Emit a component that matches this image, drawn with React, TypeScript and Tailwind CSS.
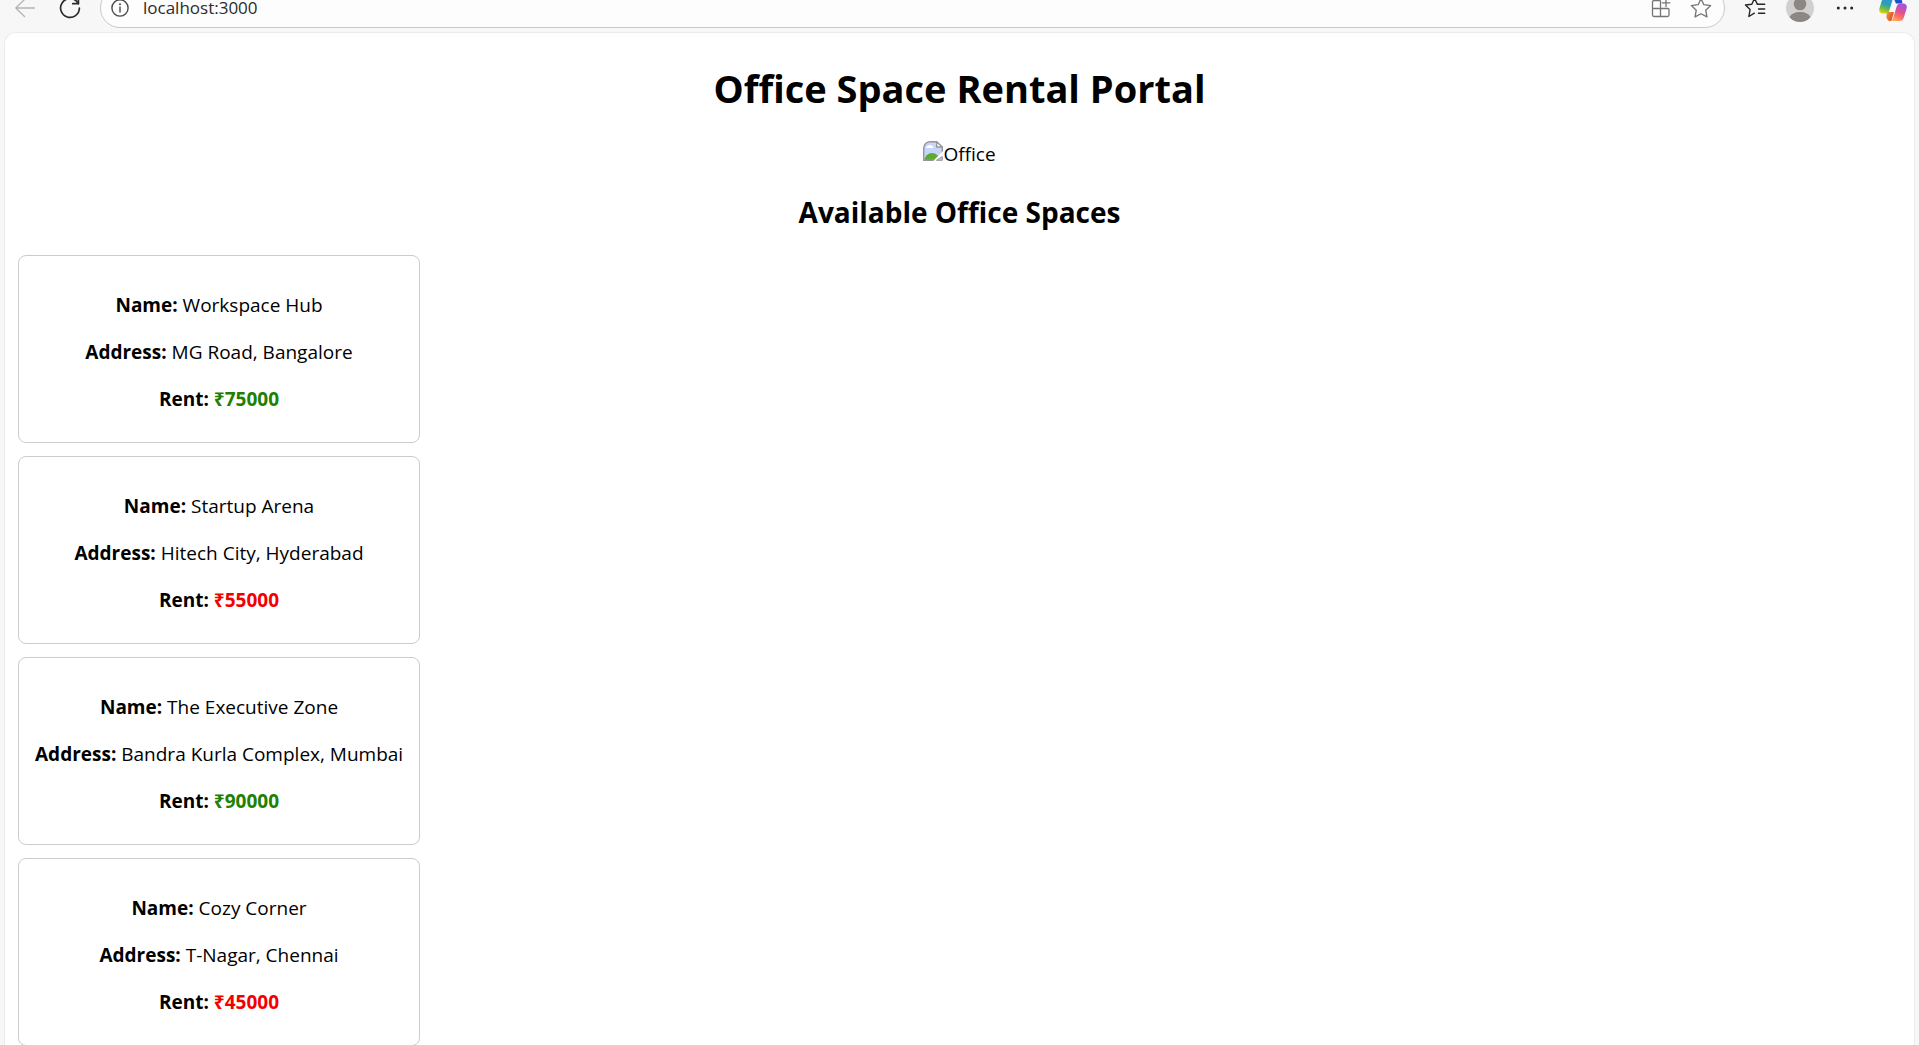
import React from "react";

type Office = { name: string; address: string; rent: number };

const offices: Office[] = [
  { name: "Workspace Hub", address: "MG Road, Bangalore", rent: 75000 },
  { name: "Startup Arena", address: "Hitech City, Hyderabad", rent: 55000 },
  { name: "The Executive Zone", address: "Bandra Kurla Complex, Mumbai", rent: 90000 },
  { name: "Cozy Corner", address: "T-Nagar, Chennai", rent: 45000 },
];

const starPath =
  "M10 1.5 L12.6 7 L18.8 7.8 L14.3 12 L15.4 18.1 L10 15.2 L4.6 18.1 L5.7 12 L1.2 7.8 L7.4 7 Z";

function BackIcon() {
  return (
    <svg width="20" height="20" viewBox="0 0 20 20" fill="none" stroke="#b4b4b4" strokeWidth="1.3" strokeLinecap="round" strokeLinejoin="round">
      <path d="M19.5 10H.8M9.5 1.5.8 10l8.7 8.5" />
    </svg>
  );
}

function ReloadIcon() {
  return (
    <svg width="22" height="22" viewBox="0 0 22 22" fill="none" stroke="#2b2b2b" strokeWidth="1.7" strokeLinecap="round" strokeLinejoin="round">
      <path d="M20.4 11A9.4 9.4 0 1 1 18.4 5.2L19.4 6.5" />
      <path d="M19.4 1v5.7h-5.6" />
    </svg>
  );
}

function InfoIcon() {
  return (
    <svg width="18" height="18" viewBox="0 0 18 18" fill="none" stroke="#4a4a4a" strokeWidth="1.4">
      <circle cx="9" cy="9" r="8.1" />
      <path d="M9 8v5" strokeLinecap="round" />
      <circle cx="9" cy="5.3" r="1" fill="#4a4a4a" stroke="none" />
    </svg>
  );
}

function AppsIcon() {
  return (
    <svg width="20" height="20" viewBox="0 0 20 20" fill="none" stroke="#757575" strokeWidth="1.3" strokeLinejoin="round">
      <path d="M9.5 2.5H3A1.5 1.5 0 0 0 1.5 4v13A1.5 1.5 0 0 0 3 18.5h13.5A1.5 1.5 0 0 0 18 17v-5.5a1 1 0 0 0-1-1H1.5M9.5 2.5v16" />
      <path d="M15 1v7.5M11.3 4.8h7.5" strokeLinecap="round" />
    </svg>
  );
}

function StarIcon() {
  return (
    <svg width="22" height="22" viewBox="0 0 20 20" fill="none" stroke="#757575" strokeWidth="1.2" strokeLinejoin="round">
      <path d={starPath} />
    </svg>
  );
}

function FavoritesIcon() {
  return (
    <svg width="22" height="22" viewBox="0 0 22 22" fill="none" stroke="#262626" strokeWidth="1.4" strokeLinejoin="round" strokeLinecap="round">
      <path d="M13.2 6.8 10.5 1.5 7.8 7.2 1.5 8 6.1 12.5 4.9 19.5 10.3 16.2" />
      <path d="M13.2 7.2h7.5M14.5 12h6.2M14.5 16.2h6.2" />
    </svg>
  );
}

function AvatarIcon() {
  return (
    <svg width="28" height="28" viewBox="0 0 28 28">
      <defs>
        <clipPath id="avatar-clip">
          <circle cx="14" cy="14" r="14" />
        </clipPath>
      </defs>
      <g clipPath="url(#avatar-clip)">
        <rect width="28" height="28" fill="#d2d0ce" />
        <circle cx="14" cy="10" r="6.3" fill="#8a8784" />
        <path d="M3.500 23C5 20 9 18 14 18s9 2 10.500 5L20 29H8Z" fill="#8a8784" />
      </g>
    </svg>
  );
}

function MoreIcon() {
  return (
    <svg width="18" height="18" viewBox="0 0 18 18" fill="#262626">
      <circle cx="2.3" cy="9" r="1.5" />
      <circle cx="9" cy="9" r="1.5" />
      <circle cx="15.7" cy="9" r="1.5" />
    </svg>
  );
}

function CopilotIcon() {
  return (
    <svg width="28" height="28" viewBox="0 0 28 28">
      <defs>
        <linearGradient id="cp-left" x1="0.6" y1="0" x2="0.3" y2="1">
          <stop offset="0" stopColor="#2a8fe8" />
          <stop offset="0.5" stopColor="#2f9fb0" />
          <stop offset="0.75" stopColor="#6cc040" />
          <stop offset="1" stopColor="#f0cc10" />
        </linearGradient>
        <linearGradient id="cp-right" x1="0.7" y1="0" x2="0.3" y2="1">
          <stop offset="0" stopColor="#9b52ee" />
          <stop offset="0.45" stopColor="#e0508f" />
          <stop offset="0.75" stopColor="#fb7564" />
          <stop offset="1" stopColor="#ffae50" />
        </linearGradient>
        <linearGradient id="cp-foot" x1="0" y1="0" x2="1" y2="0.6">
          <stop offset="0" stopColor="#f5a030" />
          <stop offset="1" stopColor="#d8432c" />
        </linearGradient>
      </defs>
      <path d="M15 2h4c2 0 3 1 3.500 3l1 4.500h-6.500L15 5Z" fill="#1f50c8" />
      <path d="M8 18h7l-2.200 7.500c-.5 1.500-2 1.800-3 1.300-1.500-.8-2-2.300-2.500-4.300Z" fill="url(#cp-foot)" />
      <path d="M8 2h8.500c-2 1-2.700 3-3.300 5L10.500 16c-.7 2.300-1.700 3.500-3.700 3.500H4C1 19.500-.3 17.500.4 14.500L3 6c.9-3 2.500-4 5-4Z" fill="url(#cp-left)" />
      <path d="M20 27h-8.500c2-1 2.700-3 3.300-5l2.700-9c.7-2.300 1.700-3.500 3.700-3.500H24c3 0 4.300 2 3.600 5L25 23c-.9 3-2.500 4-5 4Z" fill="url(#cp-right)" />
    </svg>
  );
}

function BrokenImageIcon() {
  return (
    <svg width="20" height="20" viewBox="0 0 20 20" aria-hidden="true">
      <defs>
        <clipPath id="picture-clip">
          <path d="M0 7A7 7 0 0 1 7 0H14L20 6V10L10 20H0Z" />
        </clipPath>
      </defs>
      <g clipPath="url(#picture-clip)">
        <rect width="20" height="20" fill="#c6d5f8" />
        <path d="M3 7c0-1.500 1-2 2-2 .5-1.500 3.500-1.500 4 0 1.200 0 1.500 1 1.500 2Z" fill="#fff" />
        <ellipse cx="9" cy="19.5" rx="7.5" ry="7.5" fill="#5bab2e" />
        <path d="M0.700 20V6.500Q2 .7 7 .7H14" fill="none" stroke="#959595" strokeWidth="1.4" />
        <path d="M0 19.300H12" stroke="#959595" strokeWidth="1.4" />
        <path d="M19.300 5V14" stroke="#959595" strokeWidth="1.4" />
      </g>
      <path d="M13.700.7V6h5.600Z" fill="#fff" stroke="#959595" strokeWidth="1.3" />
      <path d="M19.300 15.500V19.300H13.500Z" fill="#b5c7ea" stroke="#959595" strokeWidth="1" />
    </svg>
  );
}

function BrowserBar() {
  return (
    <header className="flex h-8 shrink-0 items-end overflow-hidden pb-1">
      <div className="flex h-10 w-full items-center">
        <button aria-label="Back" className="ml-[15px]" disabled>
          <BackIcon />
        </button>
        <button aria-label="Refresh" className="ml-6">
          <ReloadIcon />
        </button>
        <div className="ml-[19px] flex h-10 flex-1 items-center rounded-full border border-[#c9c9c9] bg-[#fdfdfd] pr-3 pl-[10px]">
          <button aria-label="View site information">
            <InfoIcon />
          </button>
          <input
            aria-label="Address"
            type="text"
            defaultValue="localhost:3000"
            className="ml-[14px] min-w-0 flex-1 bg-transparent text-[17px] leading-6 text-[#2b2b2b] outline-none"
          />
          <button aria-label="Apps">
            <AppsIcon />
          </button>
          <button aria-label="Add to favorites" className="ml-[19px]">
            <StarIcon />
          </button>
        </div>
        <button aria-label="Favorites" className="ml-[19px]">
          <FavoritesIcon />
        </button>
        <button aria-label="Profile" className="ml-5">
          <AvatarIcon />
        </button>
        <button aria-label="Settings and more" className="ml-[22px]">
          <MoreIcon />
        </button>
        <button aria-label="Copilot" className="mr-3 ml-[25px]">
          <CopilotIcon />
        </button>
      </div>
    </header>
  );
}

function OfficeCard({ office }: { office: Office }) {
  return (
    <li className="flex w-[402px] flex-col gap-5 rounded-lg border border-[#cccccc] px-4 pt-9 pb-[29px] text-center">
      <p>
        <b>Name:</b> {office.name}
      </p>
      <p className="whitespace-nowrap">
        <b>Address:</b> {office.address}
      </p>
      <p>
        <b>Rent:</b>{" "}
        <b className={office.rent > 60000 ? "text-[#218000]" : "text-[#f50000]"}>₹{office.rent}</b>
      </p>
    </li>
  );
}

export default function App() {
  return (
    <div className="flex h-screen flex-col overflow-hidden bg-[#f7f7f7] font-['Segoe_UI','Open_Sans','Noto_Sans',sans-serif] text-black">
      <BrowserBar />
      <main className="mx-1 flex-1 overflow-hidden rounded-t-xl border border-b-0 border-[#ebebeb] bg-white px-[13px] text-[19px] leading-[27px]">
        <h1 className="mt-7 text-center text-[38px] leading-[54px] font-bold">Office Space Rental Portal</h1>
        <div role="img" aria-label="Office" className="mt-[26px] flex justify-center">
          <BrokenImageIcon />
          <span>Office</span>
        </div>
        <h2 className="mt-6 text-center text-[28px] leading-10 font-bold">Available Office Spaces</h2>
        <ul className="mt-[23px] flex flex-col gap-[13px]">
          {offices.map((office) => (
            <OfficeCard key={office.name} office={office} />
          ))}
        </ul>
      </main>
    </div>
  );
}
